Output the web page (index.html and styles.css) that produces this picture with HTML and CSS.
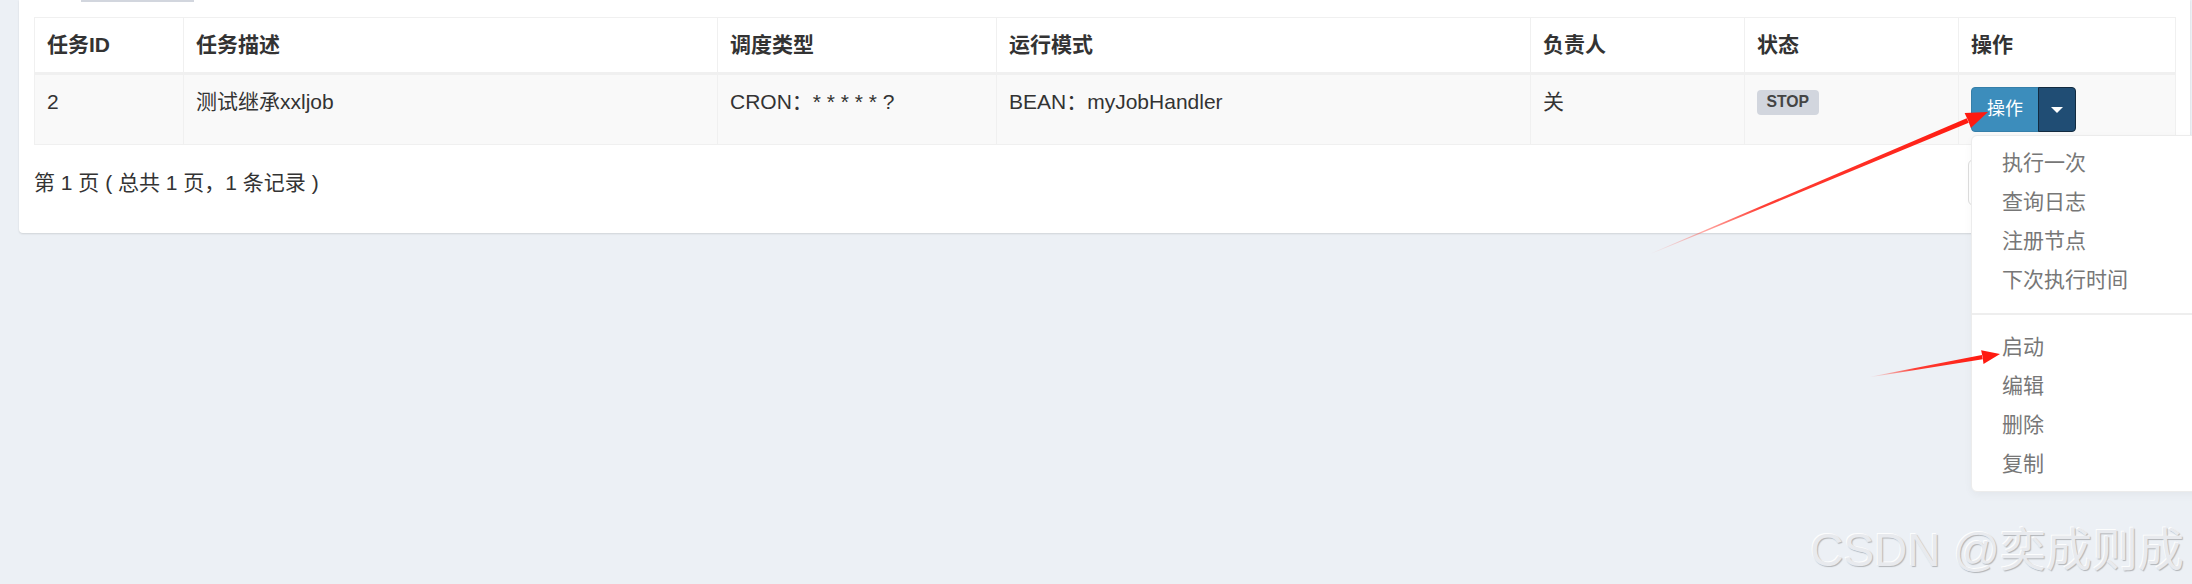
FILE: index.html
```html
<!DOCTYPE html>
<html lang="zh-CN">
<head>
<meta charset="utf-8">
<title>任务管理</title>
<link rel="stylesheet" href="styles.css">
</head>
<body>
<div class="page">
  <section class="box">
    <div class="toolbar"><span class="toolbar-edge"></span></div>
    <table class="job-table">
      <colgroup>
        <col class="c-id"><col class="c-desc"><col class="c-type"><col class="c-mode"><col class="c-owner"><col class="c-status"><col class="c-op">
      </colgroup>
      <thead>
        <tr>
          <th>任务ID</th>
          <th>任务描述</th>
          <th>调度类型</th>
          <th>运行模式</th>
          <th>负责人</th>
          <th>状态</th>
          <th>操作</th>
        </tr>
      </thead>
      <tbody>
        <tr>
          <td>2</td>
          <td>测试继承xxljob</td>
          <td>CRON：* * * * * ?</td>
          <td>BEAN：myJobHandler</td>
          <td>关</td>
          <td><span class="label">STOP</span></td>
          <td>
            <div class="btn-group">
              <button class="btn btn-main" type="button">操作</button>
              <button class="btn btn-toggle" type="button"><span class="caret"></span></button>
              <ul class="dropdown">
                <li>执行一次</li>
                <li>查询日志</li>
                <li>注册节点</li>
                <li>下次执行时间</li>
                <li class="divider"></li>
                <li>启动</li>
                <li>编辑</li>
                <li>删除</li>
                <li>复制</li>
              </ul>
            </div>
          </td>
        </tr>
      </tbody>
    </table>
    <div class="table-footer">
      <div class="info">第 1 页 ( 总共 1 页，1 条记录 )</div>
      <div class="pagination" aria-label="分页">
        <span class="page-item"></span>
        <span class="page-item"></span>
        <span class="page-item"></span>
      </div>
    </div>
  </section>
</div>

<svg class="annotations" width="2192" height="584" viewBox="0 0 2192 584" aria-hidden="true">
  <defs>
    <linearGradient id="fade1" gradientUnits="userSpaceOnUse" x1="1650" y1="254" x2="1970" y2="120">
      <stop offset="0" stop-color="#ff3b2f" stop-opacity="0"/>
      <stop offset="0.35" stop-color="#ff2a1f" stop-opacity="0.9"/>
      <stop offset="1" stop-color="#ff1a10"/>
    </linearGradient>
    <linearGradient id="fade2" gradientUnits="userSpaceOnUse" x1="1870" y1="377" x2="1982" y2="357">
      <stop offset="0" stop-color="#ff3b2f" stop-opacity="0"/>
      <stop offset="0.4" stop-color="#ff2a1f" stop-opacity="0.9"/>
      <stop offset="1" stop-color="#ff1a10"/>
    </linearGradient>
  </defs>
  <polygon fill="url(#fade1)" points="1650.1,254.3 1968.7,122.8 1966.7,118.2 1649.9,253.7"/>
  <polygon fill="#ff1a10" points="1988,112 1970.8,127.9 1968.2,120.8 1964.6,113.1"/>
  <polygon fill="url(#fade2)" points="1870,377.3 1982.7,359.3 1981.9,354.9 1870,376.7"/>
  <polygon fill="#ff1a10" points="2000,354 1983.5,364 1982.6,357 1981.1,350.2"/>
</svg>

<div class="watermark">CSDN @奕成则成</div>
</body>
</html>
```

FILE: styles.css
```css
html, body {
  margin: 0;
  padding: 0;
  width: 2192px;
  height: 584px;
  overflow: hidden;
}

body {
  position: relative;
  background: #ecf0f5;
  font-family: "Liberation Sans", "Noto Sans CJK SC", sans-serif;
  font-size: 21px;
  color: #333;
}

.page {
  display: flex;
  padding-left: 19px;
}

.box {
  box-sizing: border-box;
  width: 2171px;
  background: #fff;
  border-radius: 0 0 4px 4px;
  box-shadow: 0 1px 2px rgba(0, 0, 0, 0.12);
  padding: 0 15px 27px;
}

.toolbar {
  display: flex;
  height: 2px;
  margin-bottom: 15px;
}

.toolbar-edge {
  margin-left: 47px;
  width: 113px;
  height: 2px;
  background: #d2d6de;
}

.job-table {
  width: 100%;
  border-collapse: collapse;
  table-layout: fixed;
}

.c-id { width: 149px; }
.c-desc { width: 534px; }
.c-type { width: 279px; }
.c-mode { width: 534px; }
.c-owner { width: 214px; }
.c-status { width: 214px; }
.c-op { width: 217px; }

.job-table th,
.job-table td {
  border: 1px solid #f0f0f0;
  padding: 12px;
  line-height: 30px;
  text-align: left;
  vertical-align: top;
  white-space: nowrap;
}

.job-table th {
  font-weight: bold;
  color: #333;
  border-bottom: 3px solid #f0f0f0;
}

.job-table tbody tr {
  background: #f9f9f9;
}

.label {
  display: inline-block;
  font-size: 15.75px;
  font-weight: bold;
  line-height: 1;
  padding: 4px 9.5px 5px;
  background: #d2d6de;
  color: #444;
  border-radius: 4px;
  vertical-align: 2px;
}

.btn-group {
  position: relative;
  display: inline-flex;
  vertical-align: top;
}

.btn {
  font-family: inherit;
  font-size: 18px;
  line-height: 27px;
  padding: 8px 15px;
  border: 1px solid transparent;
  color: #fff;
  margin: 0;
}

.btn-main {
  background: #3c8dbc;
  border-color: #367fa9;
  border-radius: 4px 0 0 4px;
}

.btn-toggle {
  background: #204d74;
  border-color: #122b40;
  border-radius: 0 4px 4px 0;
  padding: 8px 12px;
  margin-left: -1px;
  display: flex;
  align-items: center;
}

.caret {
  display: block;
  width: 0;
  height: 0;
  border-top: 6px solid #fff;
  border-left: 6px solid transparent;
  border-right: 6px solid transparent;
}

.dropdown {
  position: absolute;
  top: 100%;
  left: 0;
  margin: 3px 0 0;
  padding: 7.5px 0;
  list-style: none;
  min-width: 240px;
  width: 260px;
  background: #fff;
  border: 1px solid #ececec;
  border-radius: 6px;
  box-shadow: 0 3px 8px rgba(0, 0, 0, 0.04);
  z-index: 10;
}

.dropdown li {
  padding: 4.5px 30px;
  line-height: 30px;
  color: #777;
  font-size: 21px;
}

.dropdown li.divider {
  padding: 0;
  height: 2px;
  margin: 13px 0;
  background: #eeeeee;
}

.table-footer {
  display: flex;
  justify-content: space-between;
  align-items: center;
  margin-top: 14px;
  height: 47px;
}

.info {
  line-height: 30px;
  color: #333;
}

.pagination {
  display: flex;
  width: 207px;
  height: 47px;
  box-sizing: border-box;
  border: 1px solid #ddd;
  border-radius: 6px;
}

.page-item {
  flex: 1;
  border-left: 1px solid #ddd;
}

.page-item:first-child {
  border-left: none;
}

.annotations {
  position: absolute;
  left: 0;
  top: 0;
  pointer-events: none;
  z-index: 20;
}

.watermark {
  position: absolute;
  right: 8px;
  bottom: 11px;
  font-family: "Liberation Sans", "Noto Sans CJK SC", sans-serif;
  font-size: 46px;
  line-height: 1;
  color: #e8eaee;
  text-shadow: 1px 1px 1px rgba(0, 0, 0, 0.25), -1px -1px 0 rgba(255, 255, 255, 0.9);
  z-index: 15;
}
```
